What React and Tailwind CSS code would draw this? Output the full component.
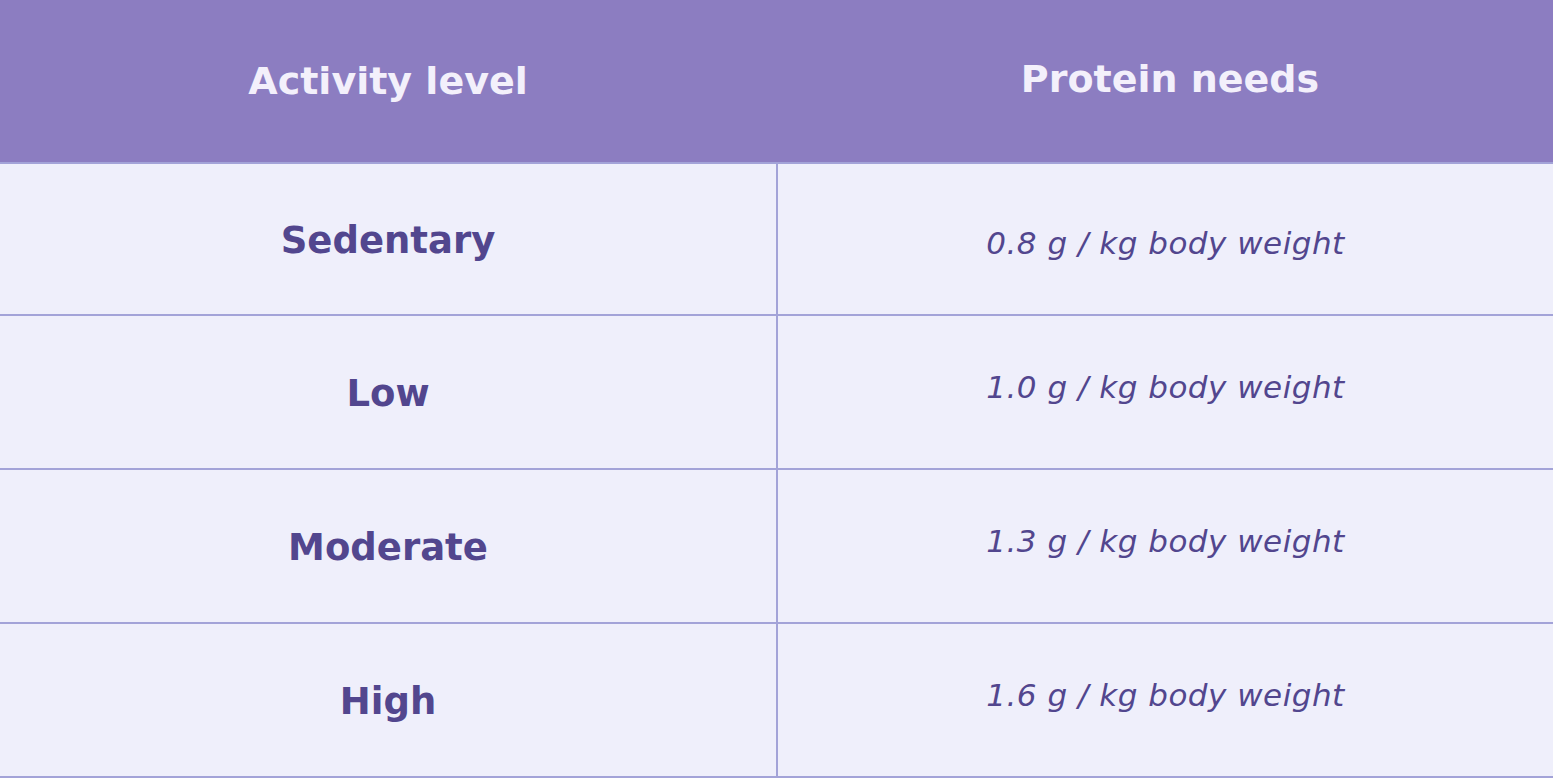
import React from 'react';

// offsets keep each cell's text where the reference puts it
const rows = [
    { level: 'Sedentary', needs: '0.8 g / kg body weight', h: 'h-[152px]', shift: 'pt-[8px]' },
    { level: 'Low', needs: '1.0 g / kg body weight', h: 'h-[154px]', shift: 'pb-[10px]' },
    { level: 'Moderate', needs: '1.3 g / kg body weight', h: 'h-[154px]', shift: 'pb-[10px]' },
    { level: 'High', needs: '1.6 g / kg body weight', h: 'h-[154px]', shift: 'pb-[10px]' },
];

const App = () => {
    return (
        <div className="w-[1553px] h-[778px] bg-[#efeffb] font-['DejaVu_Sans',sans-serif] overflow-hidden">
            {/* Header */}
            <div className="grid grid-cols-[778px_1fr] h-[164px] bg-[#8c7dc1] border-b-2 border-[#a3a3d8]">
                <div className="flex items-center justify-center text-[38px] font-bold text-[#f3f0fb] pr-[2px]">
                    Activity level
                </div>
                <div className="flex items-center justify-center text-[38px] font-bold text-[#f3f0fb] pb-[4px] pl-[9px]">
                    Protein needs
                </div>
            </div>

            {/* Rows */}
            {rows.map((row) => (
                <div key={row.level} className={`grid grid-cols-[778px_1fr] ${row.h} border-b-2 border-[#a3a3d8]`}>
                    <div className="flex items-center justify-center border-r-2 border-[#a3a3d8] text-[37px] font-bold text-[#52468e] pt-[4px]">
                        {row.level}
                    </div>
                    <div className={`flex items-center justify-center text-[31px] italic tracking-[0.5px] text-[#52468e] ${row.shift}`}>
                        {row.needs}
                    </div>
                </div>
            ))}
        </div>
    );
};

export default App;
